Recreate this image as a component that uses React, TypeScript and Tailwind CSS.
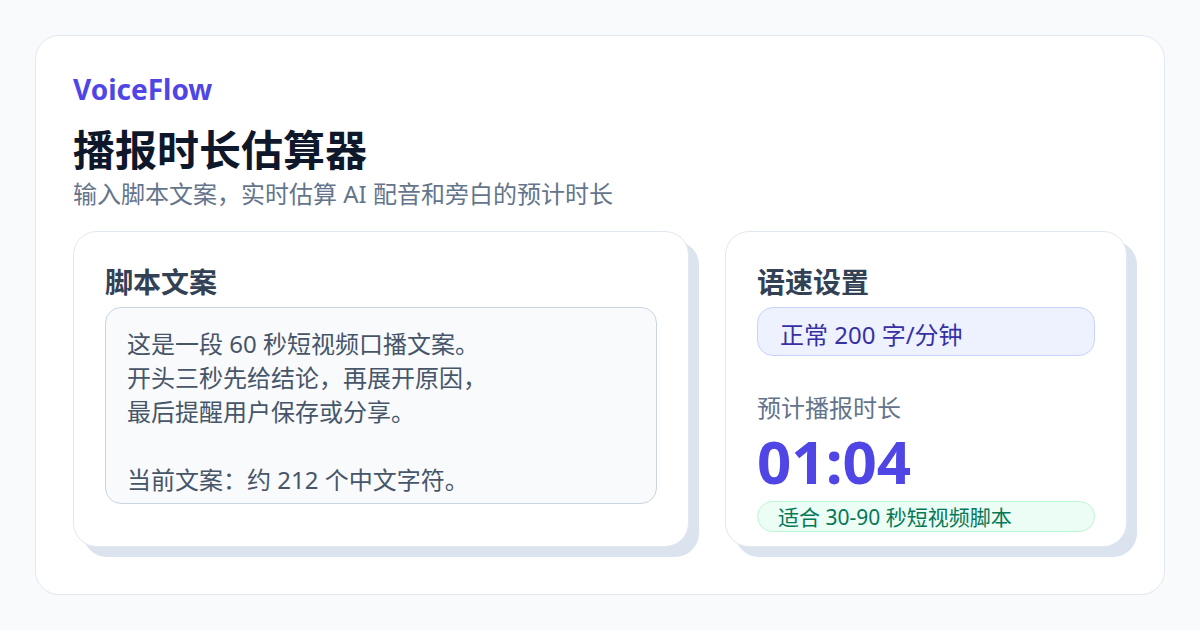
const font = { fontFamily: '"Noto Sans", "Noto Sans CJK SC", sans-serif' }

function Card({ children, width }: { children: React.ReactNode; width: string }) {
  return (
    <div
      className={`${width} h-[316px] shrink-0 rounded-3xl border border-[#e2e8f0] bg-white px-[31px] pt-[36px] shadow-[10px_10px_0_#dbe3ef]`}
    >
      {children}
    </div>
  )
}

export default function App() {
  const lines = [
    '这是一段 60 秒短视频口播文案。',
    '开头三秒先给结论，再展开原因，',
    '最后提醒用户保存或分享。',
    '',
    '当前文案：约 212 个中文字符。',
  ]

  return (
    <div className="h-[630px] w-[1200px] bg-[#f8fafc] p-[35px]" style={font}>
      <div className="h-[560px] rounded-3xl border border-[#e2e8f0] bg-white px-[37px] pt-[39px]">
        <div className="text-[28px] font-bold leading-[28px] text-[#4f46e5]">VoiceFlow</div>
        <h1 className="mt-[26px] text-[42px] font-bold leading-[42px] text-[#0f172a]">播报时长估算器</h1>
        <p className="mt-[11px] text-[24px] leading-[24px] text-[#64748b]">
          输入脚本文案，实时估算 AI 配音和旁白的预计时长
        </p>

        <div className="mt-[25px] flex gap-[36px]">
          <Card width="w-[616px]">
            <h2 className="text-[28px] font-bold leading-[28px] text-[#334155]">脚本文案</h2>
            <div className="mt-[11px] h-[197px] rounded-2xl border border-[#cbd5e1] bg-[#f8fafc] px-[21px] pt-[19px] text-[24px] leading-[34px] text-[#475569]">
              {lines.map((l, i) => (
                <div key={i} className="h-[34px]">
                  {l}
                </div>
              ))}
            </div>
          </Card>

          <Card width="w-[402px]">
            <h2 className="text-[28px] font-bold leading-[28px] text-[#334155]">语速设置</h2>
            <div className="mt-[11px] h-[49px] rounded-2xl border border-[#c7d2fe] bg-[#eef2ff] px-[22px] pt-[15px] text-[24px] leading-[24px] text-[#3730a3]">
              正常 200 字/分钟
            </div>
            <div className="mt-[40px] text-[24px] leading-[24px] text-[#64748b]">预计播报时长</div>
            <div className="mt-[11px] text-[60px] font-bold leading-[60px] text-[#4f46e5]">01:04</div>
            <div className="mt-[10px] h-[31px] rounded-2xl border border-[#bbf7d0] bg-[#ecfdf5] px-[20px] pt-[5px] text-[21px] leading-[21px] text-[#047857]">
              适合 30-90 秒短视频脚本
            </div>
          </Card>
        </div>
      </div>
    </div>
  )
}
